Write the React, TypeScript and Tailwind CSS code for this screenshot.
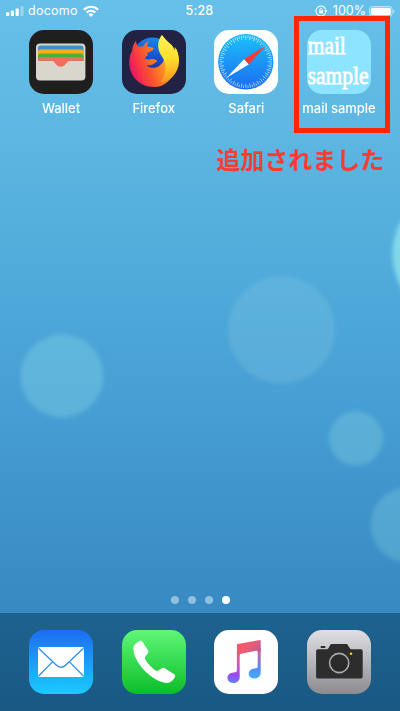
import React from "react";

type AppProps = { label?: string; children: React.ReactNode };

function AppIcon({ label, children }: AppProps) {
  return (
    <div className="flex w-16 flex-col items-center">
      <svg viewBox="0 0 64 64" className="h-16 w-16 shrink-0 overflow-hidden rounded-[15px]">
        {children}
      </svg>
      {label && (
        <span className="mt-[6px] whitespace-nowrap text-[13px] font-medium leading-4 tracking-[-0.05px] text-white">
          {label}
        </span>
      )}
    </div>
  );
}

function Wallet() {
  return (
    <>
      <rect width="64" height="64" fill="#1f1f20" />
      <rect x="7" y="13.4" width="49.4" height="37" rx="4" fill="#d9d7cc" />
      <path d="M9 30V18q0-2.4 2.4-2.4h40.6q2.4 0 2.4 2.4v12z" fill="#3a91c6" />
      <path d="M9 31V21.8q0-2.4 2.4-2.4h40.6q2.4 0 2.4 2.4V31z" fill="#ffad10" />
      <path d="M9 31v-5q0-2.4 2.4-2.4h40.6q2.4 0 2.4 2.4v5z" fill="#48b236" />
      <path d="M9 30.8v-1.4q0-2.2 2.4-2.2h40.6q2.4 0 2.4 2.2v1.4H41c-3.4 0-3.8 5.9-9.2 5.9S26 30.8 22.6 30.8z" fill="#f36e60" />
    </>
  );
}

function Firefox() {
  return (
    <>
      <defs>
        <linearGradient id="foxBody" gradientUnits="userSpaceOnUse" x1="52" y1="24" x2="9" y2="40">
          <stop offset="0" stopColor="#ffc42a" />
          <stop offset=".3" stopColor="#ff9524" />
          <stop offset=".6" stopColor="#fb5a2c" />
          <stop offset=".85" stopColor="#f5304a" />
          <stop offset="1" stopColor="#ec1465" />
        </linearGradient>
        <linearGradient id="foxGlobe" x1=".6" y1="0" x2=".45" y2="1">
          <stop offset="0" stopColor="#1688f0" />
          <stop offset=".6" stopColor="#1747c4" />
          <stop offset="1" stopColor="#272472" />
        </linearGradient>
        <linearGradient id="foxFlame" gradientUnits="userSpaceOnUse" x1="42" y1="5" x2="48" y2="52">
          <stop offset="0" stopColor="#fff456" />
          <stop offset=".5" stopColor="#ffdf2c" />
          <stop offset="1" stopColor="#ff941e" />
        </linearGradient>
        <linearGradient id="foxArm" gradientUnits="userSpaceOnUse" x1="14" y1="32" x2="36" y2="28">
          <stop offset="0" stopColor="#f8402f" stopOpacity="0" />
          <stop offset="1" stopColor="#ff8a22" />
        </linearGradient>
      </defs>
      <rect width="64" height="64" fill="#222344" />
      <circle cx="30.5" cy="27" r="19.5" fill="url(#foxGlobe)" />
      <path d="M14 10.8c.2 2.7 1 4.7 2.6 6 1.5-.4 3-.4 4.2-.1 1.6-2.6 3.7-4.6 6.1-5.4-1.4 2-1.8 3.7-1.6 5.3l5.3.9c1.3.3 1.2 1.5.2 2.4-1.2 1-3 1.8-5 2.5l-.4 3.4-2.5 1.8c.4 1.8 2.3 2.2 4.3 1.8 2.6-.7 5.6-.7 8 1.4-1.7.5-2.7 2.6-4.8 3.4-2.2.8-4.4.3-5.8.8 2.6 3.4 8.8 4 13.2.6 4-3 5.2-7.2 4-11.3l12.8-5c1.8 5.5 1.8 12-.5 18.2C50.6 49.8 42.6 57 32 57 18 57 8 46.8 7.3 34.3c-.3-5.3.6-9.8 2.9-13.2.1-4 1.4-7.4 3.8-10.3z" fill="url(#foxBody)" />
      <path d="M13 32c4-1.5 9-2.4 14.2-1.9 2.6-.7 5.4-.6 7.8 1.3-1.7.5-2.7 2.6-4.8 3.4-2.2.8-4.4.3-5.8.8C19 37.5 15 36 13 32z" fill="url(#foxArm)" />
      <path d="M40 4.7c2.5 3.6 4.5 5.9 7.7 8.5 2.6 2 4.3 4.5 4.8 7.4l.4-3.6c5.1 7.2 5.7 17.6.9 25.6-4 6.7-9.8 9.6-15.3 9.3 4.6-5.3 5.7-11.3 4.5-18.4-1-6.1-6-9.2-6.7-15.7-.5-4.8.6-9.5 3.7-13.1z" fill="url(#foxFlame)" />
    </>
  );
}

const ticks = Array.from({ length: 72 }, (_, i) => i * 5);

function Safari() {
  return (
    <>
      <defs>
        <linearGradient id="safariDial" x1="0" y1="0" x2="0" y2="1">
          <stop offset="0" stopColor="#1cc0fb" />
          <stop offset="1" stopColor="#1b6cef" />
        </linearGradient>
      </defs>
      <rect width="64" height="64" fill="#fff" />
      <circle cx="31.8" cy="31.8" r="27.7" fill="url(#safariDial)" />
      {ticks.map((a) => (
        <line key={a} x1="31.8" y1="5.5" x2="31.8" y2={a % 10 ? 8 : 9.8} stroke="#fff" strokeWidth=".65" opacity=".9" transform={`rotate(${a} 31.8 31.8)`} />
      ))}
      <path d="M51.6 15.8L30 29.3l4.7 5.2z" fill="#fb3b31" />
      <path d="M12.6 47.8L30 29.3l4.7 5.2z" fill="#fff" />
    </>
  );
}

function MailSample() {
  return (
    <>
      <rect width="64" height="64" fill="#8de4ff" />
      <g fill="#fff" stroke="#fff" strokeWidth=".8" fontSize="25" fontFamily="'Liberation Serif', serif">
        <text x=".8" y="23.8" textLength="38" lengthAdjust="spacingAndGlyphs">mail</text>
        <text x=".8" y="53.6" textLength="60.6" lengthAdjust="spacingAndGlyphs">sample</text>
      </g>
    </>
  );
}

function Mail() {
  return (
    <>
      <defs>
        <linearGradient id="mailSky" x1="0" y1="0" x2="0" y2="1">
          <stop offset="0" stopColor="#1d6df2" />
          <stop offset="1" stopColor="#1acbfe" />
        </linearGradient>
      </defs>
      <rect width="64" height="64" fill="url(#mailSky)" />
      <rect x="9" y="17" width="46" height="30" rx="1.7" fill="#fff" />
      <g fill="none" stroke="#238df5" strokeWidth="1.2">
        <path d="M9.6 18.2L27.2 35q4.8 4.6 9.6 0L54.4 18.2" />
        <path d="M9.6 46L23.5 31.8M54.4 46L40.5 31.8" />
      </g>
    </>
  );
}

function Phone() {
  return (
    <>
      <defs>
        <linearGradient id="phoneGreen" x1="0" y1="0" x2="0" y2="1">
          <stop offset="0" stopColor="#5ff777" />
          <stop offset="1" stopColor="#0bbd29" />
        </linearGradient>
      </defs>
      <rect width="64" height="64" fill="url(#phoneGreen)" />
      <path d="M17.2 11.2c1.6-.8 2.6-.4 3.6 1.1l5 7.8c.9 1.4.8 2.4-.4 3.8l-1.9 2.3c-.9 1.2-.8 2.3 0 3.6 2.4 4 5.6 7.4 9.4 10.1 1.6 1.1 2.5 1.2 3.9.3l2.6-1.7c1.4-.9 2.4-.9 3.8 0l8.3 5.3c1.7 1.1 2.2 2 1.2 3.7-1.9 3.3-4.8 5.5-8.1 5.4C31 52.5 11.4 33 11.3 18.3c0-2.9 2.6-5.5 5.9-7.1z" fill="#fff" />
    </>
  );
}

function Music() {
  return (
    <>
      <defs>
        <linearGradient id="musicLeft" gradientUnits="userSpaceOnUse" x1="26" y1="16" x2="18" y2="52">
          <stop offset="0" stopColor="#fb5268" />
          <stop offset=".45" stopColor="#d55bae" />
          <stop offset=".8" stopColor="#9b48ed" />
          <stop offset="1" stopColor="#697bff" />
        </linearGradient>
        <linearGradient id="musicRight" gradientUnits="userSpaceOnUse" x1="45" y1="10" x2="43" y2="48">
          <stop offset="0" stopColor="#f05367" />
          <stop offset=".4" stopColor="#b86cb8" />
          <stop offset=".7" stopColor="#5a84f2" />
          <stop offset="1" stopColor="#42adff" />
        </linearGradient>
        <linearGradient id="musicBeam" x1="0" y1="0" x2="1" y2=".6">
          <stop offset="0" stopColor="#ff5268" />
          <stop offset=".55" stopColor="#ee5b73" />
          <stop offset="1" stopColor="#c05d93" />
        </linearGradient>
      </defs>
      <rect width="64" height="64" fill="#fff" />
      <path d="M22.9 22h2.8v24.7c0 3.9-2.4 6.3-6.3 6.3-3.5 0-6-1.9-6-4.9 0-3.1 2.4-5.4 6.2-5.6 2.2-.1 3.3-.5 3.3-2.5z" fill="url(#musicLeft)" />
      <path d="M43.7 18h3v24.3c0 3.9-2.3 6.3-6.2 6.3-3.4 0-5.8-1.8-5.8-4.8 0-3.1 2.4-5.2 6-5.4 2.1-.1 3-.5 3-2.5z" fill="url(#musicRight)" />
      <path d="M22.9 15q0-.8.8-1l22.1-4q.9-.2.9.7v11h-3q-.2-1.2-1.7-.9l-14.9 3q-1.4.3-1.4 1.5h-2.8z" fill="url(#musicBeam)" />
    </>
  );
}

function Camera() {
  return (
    <>
      <defs>
        <linearGradient id="cameraGray" x1="0" y1="0" x2="0" y2="1">
          <stop offset="0" stopColor="#e0dfe4" />
          <stop offset="1" stopColor="#8c8b91" />
        </linearGradient>
      </defs>
      <rect width="64" height="64" fill="url(#cameraGray)" />
      <rect x="13.7" y="15.9" width="4.7" height="2.1" rx=".6" fill="#2d2d2e" />
      <path d="M10.8 19.2h8.7c1.1 0 1.8-.6 2.4-1.8l1-2c.6-1.1 1.2-1.5 2.5-1.5h13.2c1.3 0 1.9.4 2.5 1.5l1.2 2c.6 1.2 1.3 1.8 2.4 1.8H54q1.7 0 1.7 1.7v25.8q0 1.7-1.7 1.7H10.8q-1.7 0-1.7-1.7V20.9q0-1.7 1.7-1.7z" fill="#2d2d2e" />
      <circle cx="32.2" cy="33" r="9.6" fill="#2a2a2b" stroke="#aaa9ae" strokeWidth="1.6" />
      <circle cx="44" cy="23.8" r="1.3" fill="#ffcc00" />
    </>
  );
}

function StatusBar() {
  return (
    <header className="grid h-[22px] grid-cols-3 items-center pl-1.5 pr-[5px] text-[12.5px] leading-none text-white">
      <div className="flex items-center">
        <svg viewBox="0 0 18 10" className="h-[10px] w-[18px]" fill="#fff">
          <rect y="6.2" width="3.2" height="3.8" rx=".9" />
          <rect x="4.8" y="4.4" width="3.2" height="5.6" rx=".9" />
          <rect x="9.6" y="2.4" width="3.2" height="7.6" rx=".9" />
          <rect x="14.4" width="3.2" height="10" rx=".9" opacity=".35" />
        </svg>
        <span className="ml-[4px] tracking-[0.25px]">docomo</span>
        <svg viewBox="0 0 16 12" className="ml-[5px] h-3 w-4" fill="none" stroke="#fff" strokeWidth="2.1">
          <path d="M.9 4.7c4-3.9 10.2-3.9 14.2 0M3.6 7.5c2.5-2.4 6.3-2.4 8.8 0" />
          <path d="M5.5 9.4c1.4-1.4 3.6-1.4 5 0L8 11.9z" fill="#fff" stroke="none" />
        </svg>
      </div>
      <span className="pr-[2px] text-center font-medium tracking-[0.2px]">5:28</span>
      <div className="flex items-center justify-end">
        <svg viewBox="0 0 13 12" className="h-3 w-[13px]" fill="none" stroke="#fff" strokeWidth="1.1">
          <path d="M10.6 7.8A5 5 0 1 1 10.7 4.5" />
          <path d="M9 5.3h3.6L10.8 8z" fill="#fff" stroke="none" />
          <rect x="4" y="5.3" width="4" height="3.1" rx=".5" fill="#fff" stroke="none" />
          <path d="M4.9 5.4V4.3a1.1 1.1 0 0 1 2.2 0v1.1" strokeWidth=".8" />
        </svg>
        <span className="ml-[5px]">100%</span>
        <svg viewBox="0 0 26 11" className="ml-[3px] h-[11px] w-[26px]">
          <rect x=".5" y=".5" width="22.6" height="10" rx="2.7" fill="none" stroke="#fff" strokeOpacity=".55" />
          <rect x="1.7" y="1.7" width="20.2" height="7.6" rx="1.7" fill="#fff" />
          <path d="M24.2 3.8q1.4.4 1.4 1.7t-1.4 1.7z" fill="#fff" opacity=".55" />
        </svg>
      </div>
    </header>
  );
}

export default function App() {
  return (
    <div className="relative isolate flex h-[711px] w-[400px] flex-col overflow-hidden bg-linear-[180deg,#67c0e9_0%,#5db6e1_20%,#52addc_35%,#479fd4_56%,#388bc3_84%,#3586bd_100%] font-['Inter',sans-serif]">
      {/* Soft wallpaper bubbles */}
      <svg viewBox="0 0 400 711" className="absolute inset-0 -z-10 h-full w-full">
        <defs>
          <filter id="soft" x="-20%" y="-20%" width="140%" height="140%">
            <feGaussianBlur stdDeviation="2" />
          </filter>
        </defs>
        <g filter="url(#soft)">
          <circle cx="62" cy="376" r="41.5" fill="#8bdce8" opacity=".34" />
          <circle cx="281.5" cy="330" r="53.5" fill="#8ed2e6" opacity=".24" />
          <circle cx="356" cy="438.5" r="27" fill="#8ddae6" opacity=".31" />
          <circle cx="408" cy="525" r="37.5" fill="#8ddae6" opacity=".28" />
          <circle cx="461" cy="254" r="68.5" fill="#91e6ee" opacity=".75" />
        </g>
      </svg>
      <StatusBar />
      <main className="flex flex-1 flex-col">
        <div className="flex justify-between px-[29px] pt-2">
          <AppIcon label="Wallet"><Wallet /></AppIcon>
          <AppIcon label="Firefox"><Firefox /></AppIcon>
          <AppIcon label="Safari"><Safari /></AppIcon>
          <AppIcon label="mail sample"><MailSample /></AppIcon>
        </div>
        <p className="mt-[25px] pr-4 text-right font-['Noto_Sans_CJK_JP',sans-serif] text-[24px] font-bold leading-9 text-[#fb3b32]">
          追加されました
        </p>
        <div className="mt-auto flex justify-center gap-[9px] pb-[9px]">
          <i className="h-2 w-2 rounded-full bg-white/45" />
          <i className="h-2 w-2 rounded-full bg-white/45" />
          <i className="h-2 w-2 rounded-full bg-white/45" />
          <i className="h-2 w-2 rounded-full bg-white" />
        </div>
      </main>
      <footer className="flex h-[98px] justify-between bg-linear-to-b from-[#1e628f] to-[#195984] px-[29px] pt-[17px]">
        <AppIcon><Mail /></AppIcon>
        <AppIcon><Phone /></AppIcon>
        <AppIcon><Music /></AppIcon>
        <AppIcon><Camera /></AppIcon>
      </footer>
      {/* Highlight frame over the added app */}
      <div className="absolute left-[294px] top-4 h-[117px] w-[96px] border-[5px] border-[#ff2600]" />
    </div>
  );
}
